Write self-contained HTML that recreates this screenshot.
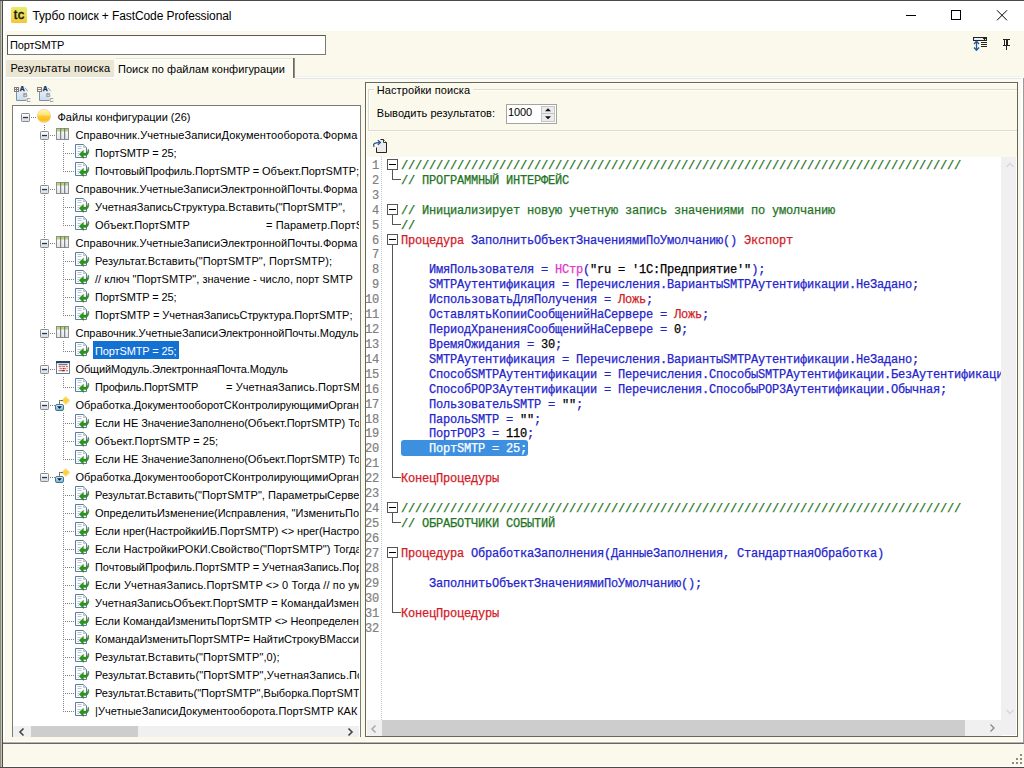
<!DOCTYPE html>
<html lang="ru"><head><meta charset="utf-8"><title>Турбо поиск + FastCode Professional</title>
<style>
*{box-sizing:border-box;margin:0;padding:0}
html,body{width:1024px;height:768px;overflow:hidden;background:#FBF9EC}
body{position:relative;font-family:"Liberation Sans",sans-serif;font-size:11px;color:#000}
.abs{position:absolute}
#win{position:absolute;left:0;top:0;width:1024px;height:768px;overflow:hidden;background:#FBF9EC}
/* frame */
#ftop{left:0;top:0;width:1024px;height:1px;background:#4a4a4a}
#fbot{left:0;top:767px;width:1024px;height:1px;background:#4a4a4a}
#fbot2{left:3px;top:766px;width:1021px;height:1px;background:#fffffa}
#fl1{left:0;top:0;width:2px;height:768px;background:linear-gradient(90deg,#8c8c80 50%,#c4c4b6 50%)}
#fl3{left:3px;top:31px;width:2px;height:711px;background:#fff}
#fl4{left:5px;top:31px;width:1px;height:711px;background:#f6f5ef}
#fl2{left:2px;top:0;width:1px;height:768px;background:#4c4c46}
#title{left:3px;top:1px;width:1021px;height:30px;background:#fff}
#ttext{left:32.5px;top:9px;letter-spacing:-0.097px;font-size:12px;line-height:15px;white-space:nowrap;color:#000}
#tcicon{left:11px;top:7px;width:16px;height:16px}
/* search */
#search{left:7px;top:35px;width:319px;height:20px;background:#fff;border:1px solid #7b7b73;border-top-color:#5a5a55;border-left-color:#5a5a55}
#stext{left:10px;top:38px;letter-spacing:-0.169px;line-height:14px;white-space:nowrap}
/* tabs */
#tab1{left:6px;top:60px;width:108px;height:17px;background:#EAE6D3}
#tab1t{left:10.4px;top:61px;letter-spacing:0.236px;line-height:14px;white-space:nowrap}
#tab2t{left:118px;top:62px;letter-spacing:0.044px;line-height:14px;white-space:nowrap}
#tabr{left:293px;top:58px;width:2px;height:20px;background:linear-gradient(90deg,#6a6a64 50%,#8e8e88 50%)}
#tab2{left:115px;top:58px;width:178px;height:20px;background:#FCFBF2;border-top:1px solid #e6e5dc;border-left:1px solid #fdfdf8;box-shadow:inset 0 1px 0 #fefef9}
#tabl1{left:295px;top:76px;width:726px;height:3px;background:linear-gradient(#f0f0ec 33.3%,#fcfcfc 33.3%,#fcfcfc 66.6%,#e6e7e5 66.6%)}
#tabl0{left:5px;top:77px;width:110px;height:2px;background:linear-gradient(#fff 50%,#fbfbf6 50%)}
#tabl2{left:5px;top:79px;width:110px;height:1px;background:#f4f3ec}
#tabl4{left:363px;top:79px;width:658px;height:3px;background:#fbfbf6}
#tabl3{left:115px;top:78px;width:178px;height:1px;background:#FCFBF2}
/* tree */
#tree{left:12px;top:105px;width:349px;height:632px;background:#fff;border:1px solid #7c7c78;border-bottom:none}
#treeclip{left:13px;top:106px;width:346px;height:620px;overflow:hidden}
#treeclip>*{position:absolute}
#treein{position:absolute;left:-13px;top:-106px;width:400px;height:700px}
#treein>*{position:absolute}
.tt{white-space:pre;line-height:18px;height:18px;font-size:11px;letter-spacing:0px}
.tselbg{height:18px;background:#1271D3}
.vd{width:1px;background-image:linear-gradient(#808080 50%,transparent 50%);background-size:1px 2px}
.hd{height:1px;background-image:linear-gradient(90deg,#808080 50%,transparent 50%);background-size:2px 1px}
.ic{position:absolute;overflow:visible}
/* tree scrollbar */
#tsb{left:13px;top:726px;width:346px;height:11px;background:#f0f0f0}
#tsbt{left:31px;top:726px;width:107px;height:11px;background:#cdcdcd}
/* right panel */
#rp{left:365px;top:82px;width:653px;height:655px;border:1px solid #66665a;background:#FBF9EC;box-shadow:inset 1px 1px 0 #fffff6}
#grp{left:368px;top:89px;width:649px;height:42px;border:1px solid #dddcd2;border-right:none;box-shadow:inset 1px 1px 0 #fffff8,0 1px 0 #fffff8}
#grpt{left:373.8px;top:83px;padding:0 3px;letter-spacing:0.088px;background:#FBF9EC;line-height:14px;white-space:nowrap}
#lbl{left:376.8px;top:106px;letter-spacing:0.042px;line-height:14px;white-space:nowrap}
#spin{left:506px;top:104px;width:51px;height:20px;background:#fff;border:1px solid #a5a59d}
#spint{left:508px;top:105px;letter-spacing:-0.121px;line-height:14px;white-space:nowrap}
#spinb{left:541px;top:106px;width:14px;height:16px;background:#ebebeb;border:1px solid #c6c6c6}
/* code */
#code{left:366px;top:157px;width:635px;height:563px;background:#fff;overflow:hidden}
#codein{position:absolute;left:-366px;top:-157px;width:1100px;height:768px}
#codein>*{position:absolute}
#gut{left:381px;top:157px;width:1px;height:563px;background-image:linear-gradient(#c8c8c8 50%,transparent 50%);background-size:1px 2px}
.ln{left:359px;width:20px;text-align:right;font-family:"Liberation Mono",monospace;font-size:12px;letter-spacing:-0.2px;margin-top:1px;-webkit-text-stroke:0.2px #808080;line-height:15px;height:15px;color:#808080;white-space:pre}
.cl{left:401px;font-family:"Liberation Mono",monospace;font-size:12px;letter-spacing:-0.2px;margin-top:1px;-webkit-text-stroke:0.25px;line-height:15px;height:15px;white-space:pre}
.c{color:#1e7423}.k{color:#d01c28}.i{color:#2424cc}.s{color:#000}.f{color:#e238cc}
.fv{width:1px;background:#555}
.fh{height:1px;background:#555}
.csel{left:401px;width:127px;height:16px;background:#3D8FDF;border-radius:3px}
#vsb{left:1001px;top:157px;width:16px;height:579px;background:#f0f0f0;border-right:1px solid #fff;border-bottom:1px solid #fff}
#hsb{left:367px;top:720px;width:634px;height:16px;background:#f0f0f0}
#hsbt{left:382px;top:720px;width:583px;height:16px;background:#cdcdcd}
/* bottom */
#spl0{left:3px;top:741px;width:1020px;height:1px;background:#fff}
#spl1{left:3px;top:742px;width:1021px;height:1px;background:#b4b4ae}
#spl2{left:3px;top:743px;width:1021px;height:1px;background:#666}
#re1{left:1021px;top:78px;width:2px;height:664px;background:#fff}
#re2{left:1023px;top:78px;width:1px;height:665px;background:#9c9c9a}
</style></head><body>
<svg width="0" height="0" style="position:absolute">
<defs>
<linearGradient id="gmin" x1="0" y1="0" x2="0" y2="1"><stop offset="0" stop-color="#fff"/><stop offset="1" stop-color="#d5dbe2"/></linearGradient>
<linearGradient id="gball" x1="0" y1="0" x2="0" y2="1"><stop offset="0" stop-color="#fff6b8"/><stop offset="0.42" stop-color="#ffe772"/><stop offset="0.5" stop-color="#ffcc33"/><stop offset="0.8" stop-color="#fdbb1c"/><stop offset="1" stop-color="#ffd980"/></linearGradient><linearGradient id="gtab" x1="0" y1="0" x2="0" y2="1"><stop offset="0" stop-color="#ffffff"/><stop offset="1" stop-color="#e4e4e0"/></linearGradient><linearGradient id="gbox" x1="0" y1="0" x2="0" y2="1"><stop offset="0" stop-color="#dff0f8"/><stop offset="1" stop-color="#74aed0"/></linearGradient><radialGradient id="gdia" cx="0.5" cy="0.5" r="0.6"><stop offset="0" stop-color="#ffc830"/><stop offset="0.6" stop-color="#ffd958"/><stop offset="1" stop-color="#fff3b8"/></radialGradient>
<symbol id="minus" viewBox="0 0 9 9"><rect x="0.5" y="0.5" width="8" height="8" rx="0.8" fill="url(#gmin)" stroke="#8a8a8a"/><rect x="2" y="3.9" width="5" height="1.3" fill="#27325c"/></symbol>
<symbol id="ball" viewBox="0 0 14 14"><circle cx="7" cy="7" r="6.7" fill="url(#gball)" stroke="#f2cfa0" stroke-width="0.7"/></symbol>
<symbol id="table" viewBox="0 0 13 12"><rect x="0.5" y="0.5" width="12" height="11" fill="url(#gtab)" stroke="#8e8e8e"/><rect x="1" y="1" width="11" height="2.2" fill="#b9d36e"/><rect x="1" y="3" width="11" height="1" fill="#d9e6b0"/><rect x="4.2" y="0.5" width="1" height="11" fill="#5d6b86"/><rect x="8.2" y="0.5" width="1" height="11" fill="#5d6b86"/></symbol>
<symbol id="module" viewBox="0 0 14 13"><rect x="0.5" y="0.5" width="13" height="12" fill="#fff" stroke="#5f8088"/><rect x="0" y="0" width="14" height="2.2" fill="#2b4263"/><rect x="2.5" y="3.2" width="9" height="1" fill="#3d6070"/><path d="M2.5 5.7H12 M3.5 7.7H11.5 M2.5 9.7H12" stroke="#e24848" stroke-width="1" stroke-dasharray="3 0.7"/><rect x="5.5" y="9.2" width="3" height="1" fill="#333"/><rect x="7" y="7.2" width="1" height="1" fill="#333"/></symbol>
<symbol id="proc" viewBox="0 0 16 16"><path d="M10.7 0.3 L15 4.5 L10.7 8.7 L6.5 4.5 Z" fill="url(#gdia)" stroke="#f3e3a0" stroke-width="0.5"/><path d="M4.5 9.5 V4.5 H8" fill="none" stroke="#111" stroke-width="1" stroke-dasharray="1.2 0.8"/><rect x="0.5" y="8.5" width="8" height="6" rx="1.5" fill="url(#gbox)" stroke="#3f7896"/><path d="M2 10.2 H7 L4.5 12.7 Z" fill="#08182e"/></symbol>
<symbol id="doc" viewBox="0 0 15 15"><path d="M0.5 0.5 H8.5 L11.5 3.5 V13.5 H0.5 Z" fill="#fdfeff" stroke="#5a7da0"/><path d="M8.5 0.5 V3.5 H11.5 Z" fill="#c9d6e2" stroke="#9ab0c4" stroke-width="0.6"/><path d="M2.5 2.5H6.5M2.5 4.5H6.5M2.5 7.5H5.5M2.5 9.5H4M2.5 11.5H4" stroke="#b4bec8" stroke-width="0.9"/><path d="M4.1 10.3 L8.4 6.2 V9 H10.6 Q12.6 8.8 13.3 5 Q14.3 7.2 13.3 9.4 Q12.3 11.6 10.4 11.6 H8.4 V14.6 Z" fill="#2e9420" stroke="#237716" stroke-width="0.4"/><path d="M13.3 5.4 Q14 7.3 13.3 9" fill="none" stroke="#6c7c3c" stroke-width="0.7"/></symbol>
<symbol id="fold" viewBox="0 0 11 11"><rect x="0.5" y="0.5" width="10" height="10" fill="#fff" stroke="#555"/><rect x="2" y="5" width="7" height="1" fill="#000"/></symbol>
</defs></svg>
<div id="win">
<div class="abs" id="title"></div>
<svg class="abs" id="tcicon" viewBox="0 0 16 16"><defs><linearGradient id="gtc" x1="0" y1="0" x2="0" y2="1"><stop offset="0" stop-color="#e9ec6c"/><stop offset="0.5" stop-color="#f0dc58"/><stop offset="1" stop-color="#f2c636"/></linearGradient></defs><rect x="0" y="0" width="16" height="16" rx="1.5" fill="url(#gtc)"/><text x="2.8" y="12" font-family="Liberation Sans, sans-serif" font-size="13" fill="#141408" stroke="#141408" stroke-width="0.45" letter-spacing="0.3">tc</text></svg>
<div class="abs" id="ttext">Турбо поиск + FastCode Professional</div>
<svg class="abs" style="left:890px;top:0" width="134" height="31" viewBox="0 0 134 31"><g stroke="#000" stroke-width="1" fill="none" shape-rendering="crispEdges"><path d="M16 15.5 H26"/><rect x="61.5" y="10.5" width="9" height="9"/></g><path d="M107 10.3 L117 20.3 M117 10.3 L107 20.3" stroke="#000" stroke-width="1" fill="none"/></svg>
<div class="abs" id="search"></div><div class="abs" id="stext">ПортSMTP</div>
<!-- toolbar icons right -->
<svg class="abs" style="left:973px;top:37px" width="15" height="14" viewBox="0 0 15 14" shape-rendering="crispEdges"><rect x="0.5" y="0.5" width="13" height="3" fill="#e9eef5" stroke="#222"/><path d="M10 1 h3 l-1.5 2z" fill="#222"/><rect x="8" y="5" width="6" height="1" fill="#222"/><rect x="8" y="7" width="6" height="1" fill="#222"/><rect x="8" y="9" width="6" height="1" fill="#222"/><g shape-rendering="auto"><path d="M3.5 5 V12" stroke="#1f5a93" stroke-width="1.3"/><path d="M1 7 L3.5 4.2 L6 7 M1 10.5 L3.5 13.3 L6 10.5" fill="none" stroke="#1f5a93" stroke-width="1.3"/></g></svg>
<svg class="abs" style="left:1003px;top:39px" width="8" height="11" viewBox="0 0 8 11" shape-rendering="crispEdges"><rect x="0" y="0" width="7" height="1" fill="#222"/><rect x="1" y="1" width="1" height="5" fill="#222"/><rect x="3" y="1" width="2" height="5" fill="#222"/><rect x="0" y="6" width="7" height="1" fill="#222"/><rect x="3" y="7" width="1" height="4" fill="#222"/></svg>
<!-- tabs -->
<div class="abs" id="tab1"></div><div class="abs" id="tab2"></div><div class="abs" id="tab1t">Результаты поиска</div><div class="abs" id="tab2t">Поиск по файлам конфигурации</div><div class="abs" id="tabr"></div>
<div class="abs" id="tabl0"></div><div class="abs" id="tabl1"></div><div class="abs" id="tabl2"></div><div class="abs" id="tabl3"></div><div class="abs" id="tabl4"></div>
<!-- tree toolbar icons -->
<svg class="abs" style="left:14px;top:86px" width="17" height="17" viewBox="0 0 17 17"><defs><linearGradient id="gpg14" x1="0" y1="0" x2="0" y2="1"><stop offset="0" stop-color="#eef4fa"/><stop offset="1" stop-color="#c9dbec"/></linearGradient></defs><path d="M2.5 5.5 V14.5 H12.5 V5 L9.5 1.5 H5" fill="url(#gpg14)" stroke="none"/><path d="M2.5 6 V14.5 H12" fill="none" stroke="#6f88a3" stroke-width="0.9"/><path d="M11 1.8 L13.8 5.3" stroke="#8d99a6" stroke-width="0.9"/><rect x="0.5" y="1.5" width="4" height="4" fill="#fff" stroke="#7c7c7c"/><g transform="translate(0,1)"><path d="M0.5 2.5H4.5M2.5 0.5V4.5" stroke="#7c7c7c" stroke-width="1"/></g><text x="5.8" y="5.4" font-family="Liberation Sans, sans-serif" font-weight="bold" font-size="6.8" fill="#16304f" stroke="#16304f" stroke-width="0.3">A</text><text x="9" y="10.8" font-family="Liberation Sans, sans-serif" font-weight="bold" font-size="6.2" fill="#8a8a8a">B</text><text x="12.2" y="15.6" font-family="Liberation Sans, sans-serif" font-weight="bold" font-size="6" fill="#8a8a8a">C</text></svg>
<svg class="abs" style="left:37px;top:86px" width="17" height="17" viewBox="0 0 17 17"><defs><linearGradient id="gpg37" x1="0" y1="0" x2="0" y2="1"><stop offset="0" stop-color="#eef4fa"/><stop offset="1" stop-color="#c9dbec"/></linearGradient></defs><path d="M2.5 5.5 V14.5 H12.5 V5 L9.5 1.5 H5" fill="url(#gpg37)" stroke="none"/><path d="M2.5 6 V14.5 H12" fill="none" stroke="#6f88a3" stroke-width="0.9"/><path d="M11 1.8 L13.8 5.3" stroke="#8d99a6" stroke-width="0.9"/><rect x="0.5" y="1.5" width="4" height="4" fill="#fff" stroke="#7c7c7c"/><g transform="translate(0,1)"><path d="M0.5 2.5H4.5" stroke="#7c7c7c" stroke-width="1"/></g><text x="5.8" y="5.4" font-family="Liberation Sans, sans-serif" font-weight="bold" font-size="6.8" fill="#16304f" stroke="#16304f" stroke-width="0.3">A</text><text x="9" y="10.8" font-family="Liberation Sans, sans-serif" font-weight="bold" font-size="6.2" fill="#8a8a8a">B</text><text x="12.2" y="15.6" font-family="Liberation Sans, sans-serif" font-weight="bold" font-size="6" fill="#8a8a8a">C</text></svg>
<!-- tree -->
<div class="abs" id="tree"></div>
<div class="abs" id="treeclip"><div id="treein">
<div class="vd" style="left:44px;top:125px;height:348px"></div>
<div class="vd" style="left:63px;top:143px;height:29px"></div>
<div class="vd" style="left:63px;top:197px;height:29px"></div>
<div class="vd" style="left:63px;top:251px;height:65px"></div>
<div class="vd" style="left:63px;top:341px;height:11px"></div>
<div class="vd" style="left:63px;top:377px;height:11px"></div>
<div class="vd" style="left:63px;top:413px;height:47px"></div>
<div class="vd" style="left:63px;top:485px;height:227px"></div>
<svg class="ic" style="left:21px;top:113px" width="9" height="9"><use href="#minus"/></svg>
<div class="hd" style="left:31px;top:117px;width:6px"></div>
<svg class="ic" style="left:37px;top:109px" width="14" height="14"><use href="#ball"/></svg>
<div class="tt" style="left:57.5px;top:108px;letter-spacing:-0.012px">Файлы конфигурации (26)</div>
<svg class="ic" style="left:40px;top:131px" width="9" height="9"><use href="#minus"/></svg>
<div class="hd" style="left:50px;top:135px;width:6px"></div>
<svg class="ic" style="left:56px;top:128px" width="13" height="12"><use href="#table"/></svg>
<div class="tt" style="left:75.5px;top:126px;letter-spacing:0.099px">Справочник.УчетныеЗаписиДокументооборота.Форма</div>
<div class="hd" style="left:65px;top:153px;width:10px"></div>
<svg class="ic" style="left:75px;top:144px" width="15" height="15"><use href="#doc"/></svg>
<div class="tt" style="left:95px;top:144px;letter-spacing:-0.123px">ПортSMTP = 25;</div>
<div class="hd" style="left:65px;top:171px;width:10px"></div>
<svg class="ic" style="left:75px;top:162px" width="15" height="15"><use href="#doc"/></svg>
<div class="tt" style="left:95px;top:162px;letter-spacing:-0.064px">ПочтовыйПрофиль.ПортSMTP = Объект.ПортSMTP;</div>
<svg class="ic" style="left:40px;top:185px" width="9" height="9"><use href="#minus"/></svg>
<div class="hd" style="left:50px;top:189px;width:6px"></div>
<svg class="ic" style="left:56px;top:182px" width="13" height="12"><use href="#table"/></svg>
<div class="tt" style="left:75.5px;top:180px;letter-spacing:0.038px">Справочник.УчетныеЗаписиЭлектроннойПочты.Форма</div>
<div class="hd" style="left:65px;top:207px;width:10px"></div>
<svg class="ic" style="left:75px;top:198px" width="15" height="15"><use href="#doc"/></svg>
<div class="tt" style="left:95px;top:198px;letter-spacing:0.013px">УчетнаяЗаписьСтруктура.Вставить("ПортSMTP",</div>
<div class="hd" style="left:65px;top:225px;width:10px"></div>
<svg class="ic" style="left:75px;top:216px" width="15" height="15"><use href="#doc"/></svg>
<div class="tt" style="left:95px;top:216px;letter-spacing:0.007px">Объект.ПортSMTP</div>
<div class="tt" style="left:266px;top:216px;letter-spacing:0.1px">= Параметр.ПортSMTP;</div>
<svg class="ic" style="left:40px;top:239px" width="9" height="9"><use href="#minus"/></svg>
<div class="hd" style="left:50px;top:243px;width:6px"></div>
<svg class="ic" style="left:56px;top:236px" width="13" height="12"><use href="#table"/></svg>
<div class="tt" style="left:75.5px;top:234px;letter-spacing:0.038px">Справочник.УчетныеЗаписиЭлектроннойПочты.Форма</div>
<div class="hd" style="left:65px;top:261px;width:10px"></div>
<svg class="ic" style="left:75px;top:252px" width="15" height="15"><use href="#doc"/></svg>
<div class="tt" style="left:95px;top:252px;letter-spacing:0.081px">Результат.Вставить("ПортSMTP", ПортSMTP);</div>
<div class="hd" style="left:65px;top:279px;width:10px"></div>
<svg class="ic" style="left:75px;top:270px" width="15" height="15"><use href="#doc"/></svg>
<div class="tt" style="left:95px;top:270px;letter-spacing:0.033px">// ключ "ПортSMTP", значение - число, порт SMTP</div>
<div class="hd" style="left:65px;top:297px;width:10px"></div>
<svg class="ic" style="left:75px;top:288px" width="15" height="15"><use href="#doc"/></svg>
<div class="tt" style="left:95px;top:288px;letter-spacing:-0.123px">ПортSMTP = 25;</div>
<div class="hd" style="left:65px;top:315px;width:10px"></div>
<svg class="ic" style="left:75px;top:306px" width="15" height="15"><use href="#doc"/></svg>
<div class="tt" style="left:95px;top:306px;letter-spacing:-0.046px">ПортSMTP = УчетнаяЗаписьСтруктура.ПортSMTP;</div>
<svg class="ic" style="left:40px;top:329px" width="9" height="9"><use href="#minus"/></svg>
<div class="hd" style="left:50px;top:333px;width:6px"></div>
<svg class="ic" style="left:56px;top:326px" width="13" height="12"><use href="#table"/></svg>
<div class="tt" style="left:75.5px;top:324px;letter-spacing:-0.042px">Справочник.УчетныеЗаписиЭлектроннойПочты.Модуль</div>
<div class="hd" style="left:65px;top:351px;width:10px"></div>
<svg class="ic" style="left:75px;top:342px" width="15" height="15"><use href="#doc"/></svg>
<div class="tselbg" style="left:93px;top:341px;width:86px"></div>
<div class="tt" style="left:95px;top:342px;letter-spacing:-0.123px;color:#fff">ПортSMTP = 25;</div>
<svg class="ic" style="left:40px;top:365px" width="9" height="9"><use href="#minus"/></svg>
<div class="hd" style="left:50px;top:369px;width:6px"></div>
<svg class="ic" style="left:56px;top:361px" width="14" height="13"><use href="#module"/></svg>
<div class="tt" style="left:75.5px;top:360px;letter-spacing:-0.141px">ОбщийМодуль.ЭлектроннаяПочта.Модуль</div>
<div class="hd" style="left:65px;top:387px;width:10px"></div>
<svg class="ic" style="left:75px;top:378px" width="15" height="15"><use href="#doc"/></svg>
<div class="tt" style="left:95px;top:378px;letter-spacing:-0.184px">Профиль.ПортSMTP</div>
<div class="tt" style="left:226px;top:378px;letter-spacing:0.1px">= УчетнаяЗапись.ПортSMTP;</div>
<svg class="ic" style="left:40px;top:401px" width="9" height="9"><use href="#minus"/></svg>
<div class="hd" style="left:50px;top:405px;width:6px"></div>
<svg class="ic" style="left:55px;top:396px" width="16" height="16"><use href="#proc"/></svg>
<div class="tt" style="left:75.5px;top:396px;letter-spacing:-0.022px">Обработка.ДокументооборотСКонтролирующимиОрганами</div>
<div class="hd" style="left:65px;top:423px;width:10px"></div>
<svg class="ic" style="left:75px;top:414px" width="15" height="15"><use href="#doc"/></svg>
<div class="tt" style="left:95px;top:414px;letter-spacing:-0.066px">Если НЕ ЗначениеЗаполнено(Объект.ПортSMTP) Тогда</div>
<div class="hd" style="left:65px;top:441px;width:10px"></div>
<svg class="ic" style="left:75px;top:432px" width="15" height="15"><use href="#doc"/></svg>
<div class="tt" style="left:95px;top:432px;letter-spacing:0.037px">Объект.ПортSMTP = 25;</div>
<div class="hd" style="left:65px;top:459px;width:10px"></div>
<svg class="ic" style="left:75px;top:450px" width="15" height="15"><use href="#doc"/></svg>
<div class="tt" style="left:95px;top:450px;letter-spacing:-0.066px">Если НЕ ЗначениеЗаполнено(Объект.ПортSMTP) Тогда</div>
<svg class="ic" style="left:40px;top:473px" width="9" height="9"><use href="#minus"/></svg>
<div class="hd" style="left:50px;top:477px;width:6px"></div>
<svg class="ic" style="left:55px;top:468px" width="16" height="16"><use href="#proc"/></svg>
<div class="tt" style="left:75.5px;top:468px;letter-spacing:-0.022px">Обработка.ДокументооборотСКонтролирующимиОрганами</div>
<div class="hd" style="left:65px;top:495px;width:10px"></div>
<svg class="ic" style="left:75px;top:486px" width="15" height="15"><use href="#doc"/></svg>
<div class="tt" style="left:95px;top:486px;letter-spacing:0.048px">Результат.Вставить("ПортSMTP", ПараметрыСервера</div>
<div class="hd" style="left:65px;top:513px;width:10px"></div>
<svg class="ic" style="left:75px;top:504px" width="15" height="15"><use href="#doc"/></svg>
<div class="tt" style="left:95px;top:504px;letter-spacing:-0.007px">ОпределитьИзменение(Исправления, "ИзменитьПорт</div>
<div class="hd" style="left:65px;top:531px;width:10px"></div>
<svg class="ic" style="left:75px;top:522px" width="15" height="15"><use href="#doc"/></svg>
<div class="tt" style="left:95px;top:522px;letter-spacing:-0.073px">Если нрег(НастройкиИБ.ПортSMTP) &lt;&gt; нрег(Настройки</div>
<div class="hd" style="left:65px;top:549px;width:10px"></div>
<svg class="ic" style="left:75px;top:540px" width="15" height="15"><use href="#doc"/></svg>
<div class="tt" style="left:95px;top:540px;letter-spacing:0.030px">Если НастройкиРОКИ.Свойство("ПортSMTP") Тогда</div>
<div class="hd" style="left:65px;top:567px;width:10px"></div>
<svg class="ic" style="left:75px;top:558px" width="15" height="15"><use href="#doc"/></svg>
<div class="tt" style="left:95px;top:558px;letter-spacing:-0.064px">ПочтовыйПрофиль.ПортSMTP = УчетнаяЗапись.Порт</div>
<div class="hd" style="left:65px;top:585px;width:10px"></div>
<svg class="ic" style="left:75px;top:576px" width="15" height="15"><use href="#doc"/></svg>
<div class="tt" style="left:95px;top:576px;letter-spacing:0.120px">Если УчетнаяЗапись.ПортSMTP &lt;&gt; 0 Тогда // по умолч</div>
<div class="hd" style="left:65px;top:603px;width:10px"></div>
<svg class="ic" style="left:75px;top:594px" width="15" height="15"><use href="#doc"/></svg>
<div class="tt" style="left:95px;top:594px;letter-spacing:0.032px">УчетнаяЗаписьОбъект.ПортSMTP = КомандаИзменить</div>
<div class="hd" style="left:65px;top:621px;width:10px"></div>
<svg class="ic" style="left:75px;top:612px" width="15" height="15"><use href="#doc"/></svg>
<div class="tt" style="left:95px;top:612px;letter-spacing:-0.050px">Если КомандаИзменитьПортSMTP &lt;&gt; Неопределено</div>
<div class="hd" style="left:65px;top:639px;width:10px"></div>
<svg class="ic" style="left:75px;top:630px" width="15" height="15"><use href="#doc"/></svg>
<div class="tt" style="left:95px;top:630px;letter-spacing:-0.061px">КомандаИзменитьПортSMTP= НайтиСтрокуВМассиве</div>
<div class="hd" style="left:65px;top:657px;width:10px"></div>
<svg class="ic" style="left:75px;top:648px" width="15" height="15"><use href="#doc"/></svg>
<div class="tt" style="left:95px;top:648px;letter-spacing:0.101px">Результат.Вставить("ПортSMTP",0);</div>
<div class="hd" style="left:65px;top:675px;width:10px"></div>
<svg class="ic" style="left:75px;top:666px" width="15" height="15"><use href="#doc"/></svg>
<div class="tt" style="left:95px;top:666px;letter-spacing:0.108px">Результат.Вставить("ПортSMTP",УчетнаяЗапись.Порт</div>
<div class="hd" style="left:65px;top:693px;width:10px"></div>
<svg class="ic" style="left:75px;top:684px" width="15" height="15"><use href="#doc"/></svg>
<div class="tt" style="left:95px;top:684px;letter-spacing:0.001px">Результат.Вставить("ПортSMTP",Выборка.ПортSMTP</div>
<div class="hd" style="left:65px;top:711px;width:10px"></div>
<svg class="ic" style="left:75px;top:702px" width="15" height="15"><use href="#doc"/></svg>
<div class="tt" style="left:95px;top:702px;letter-spacing:0.035px">|УчетныеЗаписиДокументооборота.ПортSMTP КАК</div>
</div></div>
<div class="abs" id="tsb"></div><div class="abs" id="tsbt"></div>
<svg class="abs" style="left:17px;top:727px" width="10" height="10" viewBox="0 0 10 10"><path d="M6.5 1.5 L3 5 L6.5 8.5" fill="none" stroke="#444" stroke-width="1.6"/></svg>
<svg class="abs" style="left:345px;top:727px" width="10" height="10" viewBox="0 0 10 10"><path d="M3.5 1.5 L7 5 L3.5 8.5" fill="none" stroke="#444" stroke-width="1.6"/></svg>
<!-- right panel -->
<div class="abs" id="rp"></div>
<div class="abs" id="grp"></div><div class="abs" id="grpt">Настройки поиска</div>
<div class="abs" id="lbl">Выводить результатов:</div>
<div class="abs" id="spin"></div><div class="abs" id="spint">1000</div><div class="abs" id="spinb"></div>
<svg class="abs" style="left:541px;top:106px" width="14" height="16" viewBox="0 0 14 16"><rect x="1" y="7" width="12" height="1" fill="#c4c4c4"/><path d="M4 5.2 L7 2.2 L10 5.2 Z M4 10.2 L7 13.2 L10 10.2 Z" fill="#111"/></svg>
<svg class="abs" style="left:372px;top:138px" width="16" height="16" viewBox="0 0 16 16"><path d="M4.5 9.5 V14.5 H14.5 V4.5 L11.5 1.5 H8" fill="#ececf0" stroke="none"/><path d="M4.5 9.5 V14.5 H14.5 V4.5 L11.5 1.5 H8.5" fill="none" stroke="#222" stroke-width="1"/><path d="M11.5 1.5 V4.5 H14.5" fill="#fff" stroke="#222" stroke-width="0.9"/><path d="M2.3 8.8 Q0.8 7 2.5 5.6 Q4 4.6 7.5 4.6" fill="none" stroke="#1f4f8f" stroke-width="1.25"/><path d="M5.8 2.3 L8.4 4.6 L5.8 6.9" fill="none" stroke="#1f4f8f" stroke-width="1.25"/></svg>
<div class="abs" id="code"><div id="codein">
<div class="ln" style="top:158px">1</div>
<svg class="ic" style="left:387px;top:159px" width="11" height="11"><use href="#fold"/></svg>
<div class="fv" style="left:392px;top:170px;height:3px"></div>
<div class="cl" style="top:158px"><span class="c">////////////////////////////////////////////////////////////////////////////////</span></div>
<div class="ln" style="top:173px">2</div>
<div class="fv" style="left:392px;top:173px;height:6px"></div>
<div class="fh" style="left:392px;top:179px;width:9px"></div>
<div class="cl" style="top:173px"><span class="c">// ПРОГРАММНЫЙ ИНТЕРФЕЙС</span></div>
<div class="ln" style="top:188px">3</div>
<div class="ln" style="top:203px">4</div>
<svg class="ic" style="left:387px;top:204px" width="11" height="11"><use href="#fold"/></svg>
<div class="fv" style="left:392px;top:215px;height:3px"></div>
<div class="cl" style="top:203px"><span class="c">// Инициализирует новую учетную запись значениями по умолчанию</span></div>
<div class="ln" style="top:218px">5</div>
<div class="fv" style="left:392px;top:218px;height:6px"></div>
<div class="fh" style="left:392px;top:224px;width:9px"></div>
<div class="cl" style="top:218px"><span class="c">//</span></div>
<div class="ln" style="top:233px">6</div>
<svg class="ic" style="left:387px;top:234px" width="11" height="11"><use href="#fold"/></svg>
<div class="fv" style="left:392px;top:245px;height:2px"></div>
<div class="cl" style="top:233px"><span class="k">Процедура</span><span class="s"> </span><span class="i">ЗаполнитьОбъектЗначениямиПоУмолчанию</span><span class="i">()</span><span class="s"> </span><span class="k">Экспорт</span></div>
<div class="ln" style="top:247px">7</div>
<div class="fv" style="left:392px;top:247px;height:15px"></div>
<div class="ln" style="top:262px">8</div>
<div class="fv" style="left:392px;top:262px;height:15px"></div>
<div class="cl" style="top:262px"><span class="s">    </span><span class="i">ИмяПользователя</span><span class="i"> = </span><span class="f">НСтр</span><span class="i">(</span><span class="s">"ru = '1С:Предприятие'"</span><span class="i">)</span><span class="i">;</span></div>
<div class="ln" style="top:277px">9</div>
<div class="fv" style="left:392px;top:277px;height:15px"></div>
<div class="cl" style="top:277px"><span class="s">    </span><span class="i">SMTPАутентификация</span><span class="i"> = </span><span class="i">Перечисления.ВариантыSMTPАутентификации.НеЗадано;</span></div>
<div class="ln" style="top:292px">10</div>
<div class="fv" style="left:392px;top:292px;height:15px"></div>
<div class="cl" style="top:292px"><span class="s">    </span><span class="i">ИспользоватьДляПолучения</span><span class="i"> = </span><span class="k">Ложь</span><span class="i">;</span></div>
<div class="ln" style="top:307px">11</div>
<div class="fv" style="left:392px;top:307px;height:15px"></div>
<div class="cl" style="top:307px"><span class="s">    </span><span class="i">ОставлятьКопииСообщенийНаСервере</span><span class="i"> = </span><span class="k">Ложь</span><span class="i">;</span></div>
<div class="ln" style="top:322px">12</div>
<div class="fv" style="left:392px;top:322px;height:15px"></div>
<div class="cl" style="top:322px"><span class="s">    </span><span class="i">ПериодХраненияСообщенийНаСервере</span><span class="i"> = </span><span class="s">0</span><span class="i">;</span></div>
<div class="ln" style="top:337px">13</div>
<div class="fv" style="left:392px;top:337px;height:15px"></div>
<div class="cl" style="top:337px"><span class="s">    </span><span class="i">ВремяОжидания</span><span class="i"> = </span><span class="s">30</span><span class="i">;</span></div>
<div class="ln" style="top:352px">14</div>
<div class="fv" style="left:392px;top:352px;height:15px"></div>
<div class="cl" style="top:352px"><span class="s">    </span><span class="i">SMTPАутентификация</span><span class="i"> = </span><span class="i">Перечисления.ВариантыSMTPАутентификации.НеЗадано;</span></div>
<div class="ln" style="top:367px">15</div>
<div class="fv" style="left:392px;top:367px;height:15px"></div>
<div class="cl" style="top:367px"><span class="s">    </span><span class="i">СпособSMTPАутентификации</span><span class="i"> = </span><span class="i">Перечисления.СпособыSMTPАутентификации.БезАутентификации;</span></div>
<div class="ln" style="top:382px">16</div>
<div class="fv" style="left:392px;top:382px;height:15px"></div>
<div class="cl" style="top:382px"><span class="s">    </span><span class="i">СпособPOP3Аутентификации</span><span class="i"> = </span><span class="i">Перечисления.СпособыPOP3Аутентификации.Обычная;</span></div>
<div class="ln" style="top:397px">17</div>
<div class="fv" style="left:392px;top:397px;height:15px"></div>
<div class="cl" style="top:397px"><span class="s">    </span><span class="i">ПользовательSMTP</span><span class="i"> = </span><span class="s">""</span><span class="i">;</span></div>
<div class="ln" style="top:412px">18</div>
<div class="fv" style="left:392px;top:412px;height:14px"></div>
<div class="cl" style="top:412px"><span class="s">    </span><span class="i">ПарольSMTP</span><span class="i"> = </span><span class="s">""</span><span class="i">;</span></div>
<div class="ln" style="top:426px">19</div>
<div class="fv" style="left:392px;top:426px;height:15px"></div>
<div class="cl" style="top:426px"><span class="s">    </span><span class="i">ПортPOP3</span><span class="i"> = </span><span class="s">110</span><span class="i">;</span></div>
<div class="ln" style="top:441px">20</div>
<div class="fv" style="left:392px;top:441px;height:15px"></div>
<div class="csel" style="top:440px"></div>
<div class="cl" style="top:441px;color:#fff">    ПортSMTP = 25;</div>
<div class="ln" style="top:456px">21</div>
<div class="fv" style="left:392px;top:456px;height:15px"></div>
<div class="ln" style="top:471px">22</div>
<div class="fv" style="left:392px;top:471px;height:6px"></div>
<div class="fh" style="left:392px;top:477px;width:9px"></div>
<div class="cl" style="top:471px"><span class="k">КонецПроцедуры</span></div>
<div class="ln" style="top:486px">23</div>
<div class="ln" style="top:501px">24</div>
<svg class="ic" style="left:387px;top:502px" width="11" height="11"><use href="#fold"/></svg>
<div class="fv" style="left:392px;top:513px;height:3px"></div>
<div class="cl" style="top:501px"><span class="c">////////////////////////////////////////////////////////////////////////////////</span></div>
<div class="ln" style="top:516px">25</div>
<div class="fv" style="left:392px;top:516px;height:6px"></div>
<div class="fh" style="left:392px;top:522px;width:9px"></div>
<div class="cl" style="top:516px"><span class="c">// ОБРАБОТЧИКИ СОБЫТИЙ</span></div>
<div class="ln" style="top:531px">26</div>
<div class="ln" style="top:546px">27</div>
<svg class="ic" style="left:387px;top:547px" width="11" height="11"><use href="#fold"/></svg>
<div class="fv" style="left:392px;top:558px;height:3px"></div>
<div class="cl" style="top:546px"><span class="k">Процедура</span><span class="s"> </span><span class="i">ОбработкаЗаполнения(ДанныеЗаполнения, СтандартнаяОбработка)</span></div>
<div class="ln" style="top:561px">28</div>
<div class="fv" style="left:392px;top:561px;height:15px"></div>
<div class="ln" style="top:576px">29</div>
<div class="fv" style="left:392px;top:576px;height:15px"></div>
<div class="cl" style="top:576px"><span class="s">    </span><span class="i">ЗаполнитьОбъектЗначениямиПоУмолчанию();</span></div>
<div class="ln" style="top:591px">30</div>
<div class="fv" style="left:392px;top:591px;height:15px"></div>
<div class="ln" style="top:606px">31</div>
<div class="fv" style="left:392px;top:606px;height:6px"></div>
<div class="fh" style="left:392px;top:612px;width:9px"></div>
<div class="cl" style="top:606px"><span class="k">КонецПроцедуры</span></div>
<div class="ln" style="top:621px">32</div>
</div></div>
<div class="abs" id="gut"></div>
<div class="abs" id="vsb"></div><div class="abs" id="hsb"></div><div class="abs" id="hsbt"></div>
<svg class="abs" style="left:1004.8px;top:161.3px" width="10" height="8" viewBox="0 0 10 8"><path d="M1.5 6 L5 2.5 L8.5 6" fill="none" stroke="#d8d8d8" stroke-width="1.4"/></svg>
<svg class="abs" style="left:1004.5px;top:707.7px" width="10" height="8" viewBox="0 0 10 8"><path d="M1.5 2 L5 5.5 L8.5 2" fill="none" stroke="#d8d8d8" stroke-width="1.4"/></svg>
<svg class="abs" style="left:369px;top:723.5px" width="10" height="10" viewBox="0 0 10 10"><path d="M6.5 1.5 L3 5 L6.5 8.5" fill="none" stroke="#a8a8a8" stroke-width="1.5"/></svg>
<svg class="abs" style="left:987px;top:723px" width="10" height="10" viewBox="0 0 10 10"><path d="M3.5 1.5 L7 5 L3.5 8.5" fill="none" stroke="#8a8a8a" stroke-width="1.4"/></svg>
<!-- bottom -->
<div class="abs" id="spl0"></div><div class="abs" id="spl1"></div><div class="abs" id="spl2"></div>
<div class="abs" id="re1"></div><div class="abs" id="re2"></div>
<svg class="abs" style="left:1012px;top:754px" width="12" height="12" viewBox="0 0 12 12" shape-rendering="crispEdges"><g fill="#8c8c84"><rect x="8" y="0" width="2" height="2"/><rect x="4" y="4" width="2" height="2"/><rect x="8" y="4" width="2" height="2"/><rect x="0" y="8" width="2" height="2"/><rect x="4" y="8" width="2" height="2"/><rect x="8" y="8" width="2" height="2"/></g></svg>
<!-- frame -->
<div class="abs" id="fl3"></div><div class="abs" id="fl4"></div><div class="abs" id="fl1"></div><div class="abs" id="fl2"></div><div class="abs" id="ftop"></div><div class="abs" id="fbot2"></div><div class="abs" id="fbot"></div>
</div>
</body></html>
